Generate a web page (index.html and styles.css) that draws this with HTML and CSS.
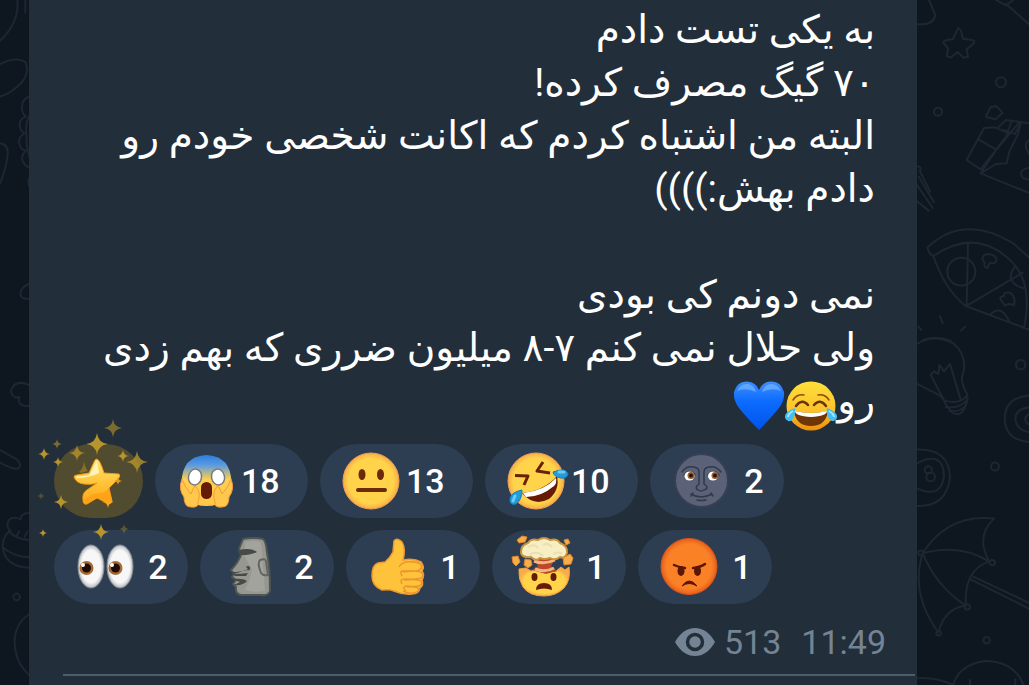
FILE: index.html
```
<!DOCTYPE html>
<html lang="fa">
<head>
  <meta charset="UTF-8" />
  <meta name="viewport" content="width=device-width, initial-scale=1.0" />
  <title>Channel post</title>
  <link rel="stylesheet" href="styles.css">
</head>
<body>
  <div class="chat">
    <svg class="wallpaper wallpaper-left" viewBox="0 0 29 685" aria-hidden="true">
      <g transform="scale(.3333)">
        <path d="M52 0Q58 70 0 122M76 0V38M0 192Q50 168 76 186Q94 225 50 262Q25 283 0 290M92 288Q64 296 66 326Q67 342 78 350Q58 356 59 378Q61 394 74 400Q54 410 58 432Q62 450 78 452Q62 466 68 484Q76 500 92 504M90 345Q74 370 80 410Q78 440 90 475M0 430Q26 434 23 462Q18 510 0 550M90 530Q82 542 88 560M92 850Q62 858 61 884Q66 900 92 896" />
        <g transform="translate(0 1020)">
          <path d="M88 136Q64 122 43 135Q25 154 40 168Q48 175 58 171Q52 190 68 196Q78 200 92 196M0 330L50 358Q68 374 54 386Q40 390 0 368M92 518Q62 518 62 538Q34 526 24 545Q18 563 32 572Q8 585 8 622Q14 680 92 684M26 574Q50 600 92 600M8 622Q50 656 92 650M48 590L58 574M74 590L82 575M92 820Q42 850 44 910Q46 970 90 1008" />
          <circle cx="50" cy="771" r="10" />
        </g>
      </g>
    </svg>

    <main class="message">
      <div class="text" dir="rtl">
        <p>به یکی تست دادم</p>
        <p>۷۰ گیگ مصرف کرده!</p>
        <p>البته من اشتباه کردم که اکانت شخصی خودم رو</p>
        <p>دادم بهش:))))</p>
        <p><br></p>
        <p>نمی دونم کی بودی</p>
        <p>ولی حلال نمی کنم ۷-۸ میلیون ضرری که بهم زدی</p>
        <p>رو<svg class="inline-emoji" viewBox="0 0 52 52" role="img" aria-label="joy">
          <circle cx="26" cy="26" r="24.500" fill="url(#joy)" />
          <path d="M8 20Q12 14 19 15M33 15Q40 14 44 20" fill="none" stroke="#8a4b08" stroke-width="1.500" stroke-linecap="round" />
          <path d="M11 26Q17 18 23 25M29 25Q35 18 41 26" fill="none" stroke="#6b3404" stroke-width="2.500" stroke-linecap="round" />
          <path d="M9 31Q26 35 43 31Q41 46 26 46Q11 46 9 31Z" fill="#6e3607" />
          <path d="M10 31Q26 35 42 31Q42 36 26 37Q10 36 10 31Z" fill="#fff" />
          <path d="M10 28Q-1 32 0 38Q3 44 8 39Q11 34 10 28ZM42 28Q53 32 52 38Q49 44 44 39Q41 34 42 28Z" fill="#43bdf2" />
          <path d="M8 31Q3 34 3 37M44 31Q49 34 49 37" fill="none" stroke="#a3e5ff" stroke-width="2" />
        </svg><svg class="inline-emoji" viewBox="0 0 52 52" role="img" aria-label="blue heart">
          <path d="M26 50Q14 38 6 28Q0 20 1 12Q4 1 14 1.500Q23 2 26 10Q29 2 38 1.500Q48 1 51 12Q52 20 46 28Q38 38 26 50Z" fill="url(#heart)" />
          <path d="M4 11Q8 3 15 4Q21 5 23 12Q13 7 4 11ZM29 12Q31 5 37 4Q44 3 48 11Q39 7 29 12Z" fill="#72b5ff" opacity=".7" />
        </svg></p>
      </div>

      <div class="reactions">
        <button class="reaction paid" aria-label="star">
          <svg viewBox="0 0 89 74">
            <path d="M43 15Q46 16 50 29L65 30Q67 32 64 35L55 44L58 57Q57 61 53 59L43 54L33 60Q29 61 29 56Q28 49 33 46L43 39Q38 41 30 40Q22 39 20 33Q20 31 23 31L35 29L40 18Q41 15 43 15Z" fill="url(#star)" stroke="#f39b11" stroke-linejoin="round" />
            <path d="M23 32Q32 33 36 30L41 20L43 17L45 29Q35 34 22 34Z" fill="#fff3b8" />
            <path d="M55 44L58 57Q57 60 53 58L43 53L33 59Q30 60 30 57Q36 50 43 49Q51 50 55 44Z" fill="#ff9c12" opacity=".7" />
            <g class="sparkles">
              <use href="#sparkle" transform="translate(59 -16) scale(9)" opacity=".6" />
              <use href="#sparkle" transform="translate(43 0) scale(11)" />
              <use href="#sparkle" transform="translate(3 0) scale(5)" opacity=".6" />
              <use href="#sparkle" transform="translate(-10 10) scale(6)" />
              <use href="#sparkle" transform="translate(4 18) scale(5)" />
              <use href="#sparkle" transform="translate(23 9) scale(8)" opacity=".8" />
              <use href="#sparkle" transform="translate(69 12) scale(6)" />
              <use href="#sparkle" transform="translate(83 18) scale(11)" opacity=".8" />
              <use href="#sparkle" transform="translate(-13 52) scale(4)" opacity=".3" />
              <use href="#sparkle" transform="translate(7 58) scale(7)" />
              <use href="#sparkle" transform="translate(-11 89) scale(4)" />
              <use href="#sparkle" transform="translate(47 88) scale(8)" />
              <use href="#sparkle" transform="translate(70 85) scale(5)" opacity=".4" />
            </g>
            <path d="M30 17Q31 24 34 27L27 29L25 28Q29 25 30 17Z" fill="#857026" />
            <use href="#sparkle" transform="translate(54 58) scale(6)" fill="#ffa51a" />
            <use href="#sparkle" transform="translate(64 37) scale(4)" fill="#e09a20" />
          </svg>
        </button>

        <button class="reaction wide">
          <svg class="emoji" viewBox="0 0 58 58" role="img" aria-label="scream">
            <path d="M4.500 31Q5 4 29.500 3Q54 4 54.500 31Q53 54 29.500 54Q6 54 4.500 31Z" fill="url(#scream)" />
            <path d="M5 27Q1 37 7 45Q7 55 14 55Q22 56 21 50Q24 41 20 36Q18 32 16 37L14 42Q8 36 5 27ZM54 27Q58 37 52 45Q52 55 45 55Q37 56 38 50Q35 41 39 36Q41 32 43 37L45 42Q51 36 54 27Z" fill="#ffc84a" stroke="#f39a46" />
            <ellipse cx="18" cy="25" rx="6.500" ry="8" fill="#fff" stroke="#777b80" stroke-width="1.500" transform="rotate(12 18 25)" />
            <ellipse cx="41" cy="25" rx="6.500" ry="8" fill="#fff" stroke="#777b80" stroke-width="1.500" transform="rotate(-12 41 25)" />
            <rect x="24" y="30" width="11" height="17" rx="5.500" fill="#651b06" />
          </svg>
          <span class="count">18</span>
        </button>

        <button class="reaction wide">
          <svg class="emoji" viewBox="0 0 58 58" role="img" aria-label="neutral face">
            <circle cx="29" cy="29" r="28" fill="url(#face)" stroke="#f1a052" />
            <ellipse cx="20" cy="22.500" rx="3.500" ry="5.500" fill="#6b2a08" />
            <ellipse cx="38.500" cy="22.500" rx="3.500" ry="5.500" fill="#6b2a08" />
            <path d="M16 38H43" stroke="#6b2a08" stroke-width="4" stroke-linecap="round" />
          </svg>
          <span class="count">13</span>
        </button>

        <button class="reaction wide">
          <svg class="emoji" viewBox="0 0 58 58" role="img" aria-label="rolling on the floor laughing">
            <circle cx="29" cy="29" r="28" fill="url(#face)" stroke="#f1a052" />
            <path d="M8 23.500L21 24L17 33M36 10L30 19L43 21" fill="none" stroke="#6b2107" stroke-width="3" stroke-linejoin="round" />
            <path d="M15 41Q37 39 50 24Q53 38 42 47Q27 55 15 41Z" fill="#651b06" />
            <path d="M16 41Q37 39 49 26Q50 31 47 34Q34 45 19 45Z" fill="#fff" />
            <path d="M46 20Q59 15 61 22Q60 27 54 26Q47 25 46 20ZM15 38Q15 48 9 52Q2 54 3 46Q5 40 15 38Z" fill="#239bdc" stroke="#147dba" />
            <path d="M52 20L57 20M8 44L6 49" stroke="#6ccaf5" stroke-width="3" stroke-linecap="round" />
          </svg>
          <span class="count">10</span>
        </button>

        <button class="reaction">
          <svg class="emoji" viewBox="0 0 58 58" role="img" aria-label="new moon face">
            <circle cx="29.500" cy="28.500" r="26.500" fill="#5b6277" stroke="#373f54" stroke-width="2" />
            <g fill="none" stroke="#30384c" stroke-width="1.500" stroke-linecap="round">
              <path d="M10 20Q15 12 25 16Q27 17 27 20V32Q22 36 26 38Q29 40 32 38Q38 36 32 32V20Q32 17 34 16Q43 12 49 20M19 42Q29 48 40 42M19 44L21 41M39 41L41 44M25 48Q29 49 34 48M12 23Q17 16 23 23M36 23Q41 16 47 23" />
            </g>
            <ellipse cx="17.500" cy="24" rx="5" ry="4.500" fill="#fff" />
            <ellipse cx="41" cy="24" rx="5" ry="4.500" fill="#fff" />
            <circle cx="19" cy="23.500" r="3.500" fill="#9b602f" />
            <circle cx="43" cy="23.500" r="3.500" fill="#9b602f" />
            <circle cx="19" cy="23.500" r="2" fill="#251614" />
            <circle cx="43" cy="23.500" r="2" fill="#251614" />
          </svg>
          <span class="count">2</span>
        </button>

        <button class="reaction">
          <svg class="emoji" viewBox="0 0 58 58" role="img" aria-label="eyes">
            <ellipse cx="15" cy="28.500" rx="13" ry="21.500" fill="url(#eyeball)" stroke="#858b91" />
            <ellipse cx="44" cy="28.500" rx="13" ry="21.500" fill="url(#eyeball)" stroke="#858b91" />
            <circle cx="10.500" cy="30" r="7" fill="#a36a35" />
            <circle cx="39.500" cy="30" r="7" fill="#a36a35" />
            <circle cx="10.500" cy="30" r="4.500" fill="#210b07" />
            <circle cx="39.500" cy="30" r="4.500" fill="#210b07" />
            <circle cx="7" cy="27" r="2" fill="#fff" />
            <circle cx="36" cy="27" r="2" fill="#fff" />
          </svg>
          <span class="count">2</span>
        </button>

        <button class="reaction">
          <svg class="emoji" viewBox="0 0 58 58" role="img" aria-label="moai">
            <path d="M21 1Q31 -1 41 1Q44 3 45 15Q48 29 48 53Q46 58 40 57H19Q13 56 14 49L11 46L14 42L10 39L12 36L9 32Q16 25 19 17L17 11Z" fill="#969791" stroke="#505552" stroke-width="2" stroke-linejoin="round" />
            <path d="M23 4Q32 2 39 4L43 53Q34 55 23 52L27 43L30 32L23 19Z" fill="#aaaba3" opacity=".6" />
            <path d="M17 12Q29 9 35 14Q29 17 19 17ZM10 34Q19 34 25 32Q29 33 28 29Q26 27 24 29L26 31Q20 34 11 36Q20 36 26 35L24 38H13ZM10 41Q21 40 25 43Q21 48 12 47L18 44Z" fill="#484a47" />
            <path d="M38 22Q43 20 44 23L46 37Q41 38 39 35Q35 25 38 22Z" fill="none" stroke="#626560" stroke-width="2" />
          </svg>
          <span class="count">2</span>
        </button>

        <button class="reaction">
          <svg class="emoji" viewBox="0 0 58 58" role="img" aria-label="thumbs up">
            <path d="M26 3Q29 -1 34 4Q38 11 35 22Q46 20 53 24Q57 29 54 33Q57 37 54 42Q56 47 52 50Q51 56 44 56Q35 57 26 53Q22 51 14 52Q4 48 4 38Q4 27 10 25L17 24Q22 20 25 14Z" fill="#ffc33b" stroke="#ef9931" stroke-width="1.500" />
            <path d="M31 29Q35 21 51 25Q57 30 49 33H35Q31 33 34 38M35 34Q54 31 55 37Q56 42 37 41Q31 41 34 46M36 42Q53 40 54 45Q53 50 39 48Q33 49 38 53M39 49Q51 48 51 52Q46 58 35 53" fill="none" stroke="#ec9530" stroke-width="1.500" />
          </svg>
          <span class="count">1</span>
        </button>

        <button class="reaction">
          <svg class="emoji" viewBox="0 0 58 58" role="img" aria-label="exploding head">
            <path d="M5 31L12 30L17 33L22 31L27 34L35 31L41 34L47 29L51 32L55 29Q57 42 50 50Q42 58 30 58Q15 58 9 49Q4 41 5 31Z" fill="url(#face)" stroke="#f2a044" />
            <path d="M20 21H41L37 28L43 33L32 36L18 32L24 28Z" fill="#bb4928" />
            <path d="M20 23Q30 27 41 22M21 31Q31 35 40 30" fill="none" stroke="#f2b583" stroke-width="3" />
            <path d="M7 14Q7 7 14 5Q17 0 24 2Q30 -2 36 2Q43 0 46 5Q54 8 53 15Q51 21 46 19Q41 23 36 20Q30 22 26 20Q22 24 17 19Q7 20 7 14Z" fill="#f8eec3" stroke="#c99341" stroke-width="2" />
            <path d="M14 9Q21 5 24 10M29 7Q34 4 38 9M15 17Q23 12 29 18M39 16Q45 13 48 16" fill="none" stroke="#ebdfb2" stroke-width="2" />
            <path d="M3 2L8 -2L13 -1L11 4L5 5ZM50 2L54 1L56 5L52 7ZM-2 19L4 18L6 24L2 28L-1 25ZM11 21L17 22L18 27L14 30L10 27ZM49 20L56 16L59 20L57 26L50 27Z" fill="#f7ae48" stroke="#dc8430" />
            <ellipse cx="20.500" cy="39" rx="3" ry="4" fill="#651b06" />
            <ellipse cx="39.500" cy="39" rx="3" ry="4" fill="#651b06" />
            <path d="M22 52Q22 45 30 45Q38 45 38 52Q30 49 22 52Z" fill="#651b06" />
          </svg>
          <span class="count">1</span>
        </button>

        <button class="reaction">
          <svg class="emoji" viewBox="0 0 58 58" role="img" aria-label="enraged face">
            <circle cx="29" cy="28.500" r="28" fill="url(#rage)" stroke="#d95518" />
            <path d="M14 27Q18 29 25 30M33 30Q41 29 45 26" fill="none" stroke="#5b1607" stroke-width="2.500" stroke-linecap="round" />
            <ellipse cx="21" cy="33" rx="3.500" ry="5" fill="#5b1607" />
            <ellipse cx="37.500" cy="33" rx="3.500" ry="5" fill="#5b1607" />
            <path d="M22 48Q29 38 37 48Q29 43 22 48Z" fill="#5b1607" stroke="#5b1607" />
          </svg>
          <span class="count">1</span>
        </button>
      </div>

      <div class="meta">
        <svg class="views-icon" viewBox="0 0 40 30" aria-hidden="true">
          <path d="M0 15Q8 1 20 1Q32 1 40 15Q32 29 20 29Q8 29 0 15Z" fill="currentColor" />
          <circle cx="20" cy="15" r="7.500" fill="currentColor" stroke="#222e39" stroke-width="3.500" />
        </svg>
        <span>513</span>
        <time>11:49</time>
      </div>
      <hr>
    </main>

    <svg class="wallpaper wallpaper-right" viewBox="0 0 112 685" aria-hidden="true">
      <g transform="translate(-37 0) scale(.3333)">
        <path d="M147 0L166 45Q160 78 111 72M348 0L378 16L400 0M378 12L450 75M235 84Q242 84 249 116L277 120Q290 124 277 134L260 148L264 170L250 173L233 156L212 173L200 168L205 145L190 128Q188 120 218 118Z" />
        <circle cx="363" cy="247" r="15" />
        <circle cx="174" cy="335" r="12" />
        <path d="M318 348L332 322L348 318L368 338L347 358L320 352ZM312 384L260 480L302 508L340 460L385 400L345 382ZM298 420L345 447M355 382L378 360L450 370M370 390L405 402L422 370M385 390L394 366M302 520L345 455L415 370M302 520L450 580M302 520L348 492L380 490L388 455L415 400L422 370M450 420Q425 430 450 465M450 503Q410 510 430 535L450 540M111 500Q126 498 120 515L150 574M116 530L162 607M111 555L158 624M111 604L146 632" />
        <path d="M143 742Q250 640 400 730L450 775M143 742Q145 762 160 768Q290 680 395 785Q460 850 432 985M160 768Q195 870 257 918L450 990M264 728L260 918L428 818M308 780Q305 762 328 762Q352 766 349 784Q342 793 330 788L322 804Q310 802 314 788ZM364 902Q355 890 372 888Q370 875 390 878Q408 890 402 915L386 912L375 918ZM405 800Q370 845 430 865M330 945Q362 910 388 965M180 948L188 970M255 980L243 992M116 980L124 990" />
        <circle cx="244" cy="815" r="42" />
        <path d="M130 1020Q170 1005 212 1023" />
        <g transform="translate(0 1020)">
          <path d="M111 12Q160-20 220 10Q265 50 248 105Q240 125 262 164Q265 183 252 208Q239 232 216 217L195 190Q192 171 162 157L111 132M193 182L152 105L162 94L175 102L178 75L192 94L210 72L241 176M193 182Q242 195 262 165M198 202Q240 205 260 182M208 213Q240 216 255 200" />
          <circle cx="422" cy="74" r="14" />
          <path d="M450 166Q375 172 374 237Q377 302 450 306M450 202Q407 205 406 237Q410 273 450 277M450 220Q421 238 450 256M111 329Q208 326 210 412Q200 501 111 498M111 370Q190 330 192 408Q185 477 111 446" />
          <circle cx="145" cy="390" r="11" />
          <circle cx="152" cy="411" r="13" />
          <circle cx="345" cy="380" r="12" />
          <path d="M128 640Q205 520 342 536Q285 590 328 665Q240 610 128 640Q170 740 258 797Q250 690 328 665M128 640Q90 760 175 877Q195 805 258 797M280 710L450 790M272 718L450 808" />
          <circle cx="122" cy="639" r="7" />
          <circle cx="337" cy="668" r="8" />
          <circle cx="262" cy="801" r="8" />
          <circle cx="176" cy="880" r="7" />
          <circle cx="320" cy="901" r="10" />
          <path d="M111 1015Q165 1010 220 1035Q235 975 315 963Q405 965 430 1035M270 1020V1035M406 1018V1035" />
        </g>
      </g>
    </svg>
  </div>

  <!-- shared fills -->
  <svg class="defs" width="0" height="0" aria-hidden="true">
    <defs>
      <radialGradient id="face"><stop offset=".8" stop-color="#ffd44a" /><stop offset="1" stop-color="#f8ad48" /></radialGradient>
      <radialGradient id="rage"><stop offset=".8" stop-color="#fb8127" /><stop offset="1" stop-color="#e65e1c" /></radialGradient>
      <radialGradient id="eyeball"><stop offset=".75" stop-color="#f7f7f7" /><stop offset="1" stop-color="#b5b8bb" /></radialGradient>
      <linearGradient id="scream" x2="0" y2="1"><stop stop-color="#2d7de0" /><stop offset=".2" stop-color="#5b9be0" /><stop offset=".48" stop-color="#ffcf4d" /><stop offset="1" stop-color="#ffc844" /></linearGradient>
      <linearGradient id="joy" x2="0" y2="1"><stop stop-color="#ffe03b" /><stop offset=".6" stop-color="#fbc22b" /><stop offset="1" stop-color="#ed8f0c" /></linearGradient>
      <linearGradient id="heart" x2="0" y2="1"><stop stop-color="#3f8eff" /><stop offset=".4" stop-color="#0d6cff" /><stop offset="1" stop-color="#0053ea" /></linearGradient>
      <linearGradient id="star" x2="0" y2="1"><stop stop-color="#ffe27a" /><stop offset=".5" stop-color="#ffc63c" /><stop offset="1" stop-color="#ffa51a" /></linearGradient>
      <path id="sparkle" d="M0-1Q.1-.1 1 0Q.1.1 0 1Q-.1.1-1 0Q-.1-.1 0-1Z" />
    </defs>
  </svg>
</body>
</html>
```
FILE: styles.css
```
* {
  box-sizing: border-box;
}
body {
  margin: 0;
  background: #0e1720;
  font-family: Roboto, "DejaVu Sans", sans-serif;
  color: #fff;
}
.chat {
  display: flex;
  min-height: 100vh;
  overflow: hidden;
}
.wallpaper {
  flex: none;
  height: 685px;
  fill: none;
  stroke: #1c2731;
  stroke-width: 6;
  stroke-linecap: round;
  stroke-linejoin: round;
}
.wallpaper-left {
  width: 29px;
}
.wallpaper-right {
  width: 112px;
}
.message {
  flex: 1;
  min-width: 0;
  background: #222e39;
}
.text {
  padding: 4px 42px 0 24px;
  font-size: 39px;
  line-height: 53px;
}
.text p {
  margin: 0;
  height: 53px;
  white-space: nowrap;
}
.inline-emoji {
  width: 52px;
  height: 52px;
  vertical-align: -18px;
}
.reactions {
  display: flex;
  flex-wrap: wrap;
  gap: 12px;
  padding: 16px 24px 0 25px;
}
.reaction {
  display: flex;
  align-items: center;
  gap: 6px;
  width: 134px;
  height: 74px;
  padding: 0 0 0 22px;
  border: 0;
  border-radius: 37px;
  background: #2d3e52;
  color: #fff;
  font: 500 34px Roboto, sans-serif;
}
.reaction.wide {
  width: 153px;
}
.reaction.paid {
  position: relative;
  z-index: 1;
  width: 89px;
  padding: 0;
  background: #514b2f;
}
.reaction svg {
  flex: none;
  overflow: visible;
}
.paid svg {
  width: 89px;
  height: 74px;
}
.sparkles {
  fill: #b8952c;
}
.emoji {
  width: 58px;
  height: 58px;
}
.count {
  width: 36px;
  text-align: center;
}
.meta {
  display: flex;
  align-items: center;
  justify-content: flex-end;
  padding: 18px 31px 0 0;
  color: #758494;
  font-size: 34px;
  line-height: 40px;
}
.views-icon {
  width: 40px;
  height: 30px;
  margin-right: 9px;
}
.meta time {
  margin-left: 20px;
}
hr {
  height: 2px;
  margin: 12px 2px 0 34px;
  border: 0;
  background: #4c5c6b;
}
.defs {
  position: absolute;
}
```
